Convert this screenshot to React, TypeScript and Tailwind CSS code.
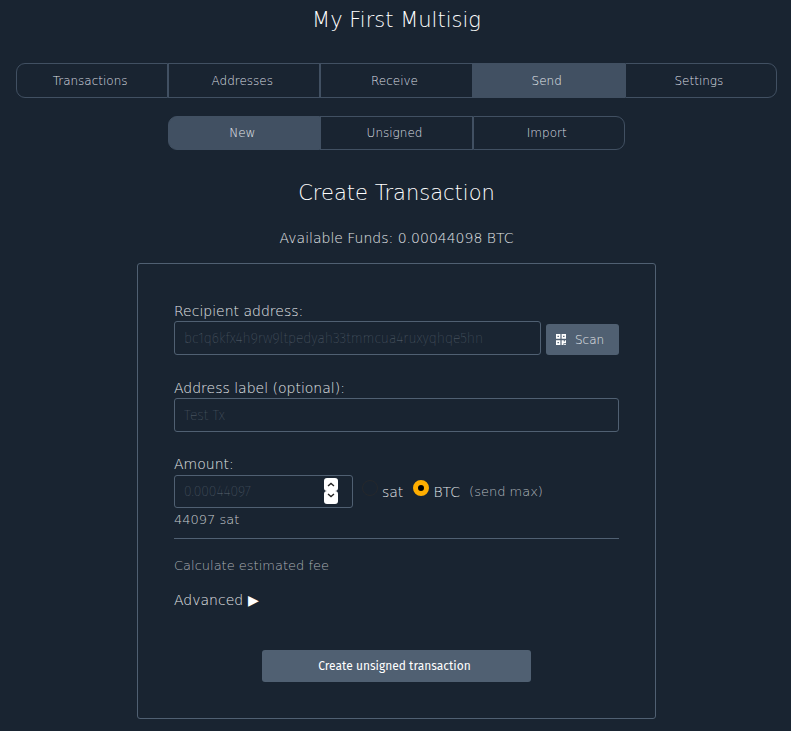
import React, { useState } from "react";

const mainTabs = ["Transactions", "Addresses", "Receive", "Send", "Settings"];
const sendTabs = ["New", "Unsigned", "Import"];

function TabBar({
  tabs,
  active,
  height,
  label,
}: {
  tabs: string[];
  active: string;
  height: string;
  label: string;
}) {
  return (
    <nav aria-label={label} className={`flex ${height}`}>
      {tabs.map((tab) => (
        <a
          key={tab}
          href="#"
          aria-current={tab === active ? "page" : undefined}
          className={`flex flex-1 items-center justify-center border border-[#415062] pr-1 text-xs first:rounded-l-[9px] last:rounded-r-[9px] ${
            tab === active ? "bg-[#415062] text-[#e4e8ec]" : "text-[#dcdfe2]"
          }`}
        >
          {tab}
        </a>
      ))}
    </nav>
  );
}

function QrIcon() {
  return (
    <svg viewBox="0 0 10 11" className="h-[11px] w-[10px]" fill="#fff" aria-hidden="true">
      <path
        fillRule="evenodd"
        d="M0 0h4.4v4.8H0zM1.5 1.7v1.4h1.4V1.7zM5.6 0H10v4.8H5.6zM7.1 1.7v1.4h1.4V1.7zM0 6.2h4.4V11H0zM1.5 7.9v1.4h1.4V7.9z"
      />
      <path d="M5.6 6.2h2.2v1.2h1V6.2H10v3H7.5V11H5.6zM8 10h.8v1H8zM9.2 10h.8v1h-.8z" />
    </svg>
  );
}

function Chevron({ up }: { up?: boolean }) {
  return (
    <svg viewBox="0 0 8 5" className="h-[5px] w-2" fill="none" stroke="#222" strokeWidth="1.3" aria-hidden="true">
      <path d={up ? "M1 4l3-2.6L7 4" : "M1 1l3 2.6L7 1"} />
    </svg>
  );
}

const inputStyle =
  "w-full rounded-[3px] border border-[#506072] bg-transparent px-[9px] font-['Fira_Sans','Noto_Sans',sans-serif] text-sm font-extralight text-[#dcdfe2] outline-none placeholder:text-[#5c6672]";

const radioStyle =
  "-mt-0.5 mb-1.5 h-4 w-4 appearance-none rounded-full border border-[#25282c] checked:border-[5px] checked:border-[#ffae00] checked:bg-black";

export default function App() {
  const [unit, setUnit] = useState("BTC");

  return (
    <main className="min-h-screen bg-[#192431] pr-3.5 pb-3 pl-4 font-['DejaVu_Sans',sans-serif] text-sm font-extralight text-[#e2e5e8]">
      <h1 className="pt-1 text-center text-[21px] leading-8 text-white">My First Multisig</h1>

      <div className="pt-[27px]">
        <TabBar tabs={mainTabs} active="Send" height="h-[35px]" label="Wallet" />
      </div>
      <div className="mx-auto w-3/5 pt-[18px]">
        <TabBar tabs={sendTabs} active="New" height="h-[34px]" label="Send" />
      </div>

      <h2 className="pt-[27px] text-center text-[21px] leading-8 text-white">Create Transaction</h2>
      <p className="pt-[19px] text-center leading-5">Available Funds: 0.00044098 BTC</p>

      <form
        onSubmit={(e) => e.preventDefault()}
        className="mx-auto mt-[15px] max-w-[519px] rounded-[3px] border border-[#506072] px-9 pt-[37px] pb-9"
      >
        <label htmlFor="recipient" className="block leading-5">
          Recipient address:
        </label>
        <div className="flex items-end gap-[5px]">
          <input
            id="recipient"
            className={`${inputStyle} h-[34px]`}
            placeholder="bc1q6kfx4h9rw9ltpedyah33tmmcua4ruxyqhqe5hn"
          />
          <button
            type="button"
            className="flex h-[31px] w-[73px] shrink-0 items-center gap-[9px] rounded-[3px] bg-[#506072] pl-2.5 text-xs text-[#e2e5e8]"
          >
            <QrIcon />
            Scan
          </button>
        </div>

        <label htmlFor="label" className="mt-[23px] block leading-5">
          Address label (optional):
        </label>
        <input id="label" className={`${inputStyle} block h-[34px]`} placeholder="Test Tx" />

        <label htmlFor="amount" className="mt-[22px] block leading-5">
          Amount:
        </label>
        <div className="mt-px flex items-center">
          <div className="relative w-[179px]">
            <input
              id="amount"
              type="number"
              className={`${inputStyle} block h-[33px] [appearance:textfield] [&::-webkit-inner-spin-button]:appearance-none`}
              placeholder="0.00044097"
            />
            <div className="absolute top-[3px] right-[15px] flex w-3.5 flex-col">
              <button
                type="button"
                aria-label="Increase"
                className="flex h-[13px] items-center justify-center rounded-[3px] bg-white"
              >
                <Chevron up />
              </button>
              <button
                type="button"
                aria-label="Decrease"
                className="flex h-[13px] items-center justify-center rounded-[3px] bg-white pb-1"
              >
                <Chevron />
              </button>
            </div>
          </div>
          <label className="ml-[9px] flex items-start gap-1 leading-5">
            <input
              type="radio"
              name="unit"
              checked={unit === "sat"}
              onChange={() => setUnit("sat")}
              className={radioStyle}
            />
            sat
          </label>
          <label className="ml-2.5 flex items-start gap-1 leading-5">
            <input
              type="radio"
              name="unit"
              checked={unit === "BTC"}
              onChange={() => setUnit("BTC")}
              className={radioStyle}
            />
            BTC
          </label>
          <button type="button" className="ml-[9px] text-[13px] leading-5 text-[#b4b9bf]">
            (send max)
          </button>
        </div>
        <p className="mt-0.5 text-[13px] leading-5 text-[#c8ccd0]">44097 sat</p>

        <hr className="mt-2 border-[#506072]" />

        <button type="button" className="mt-[17px] block text-[13px] leading-5 text-[#a9aeb4]">
          Calculate estimated fee
        </button>
        <button type="button" className="mt-3.5 block leading-5">
          Advanced <span className="text-white">▶</span>
        </button>

        <button
          type="submit"
          className="mx-auto mt-10 block h-8 w-[269px] rounded-[3px] bg-[#506072] pr-1 font-['Fira_Sans','Noto_Sans',sans-serif] text-xs font-normal text-white"
        >
          Create unsigned transaction
        </button>
      </form>
    </main>
  );
}
